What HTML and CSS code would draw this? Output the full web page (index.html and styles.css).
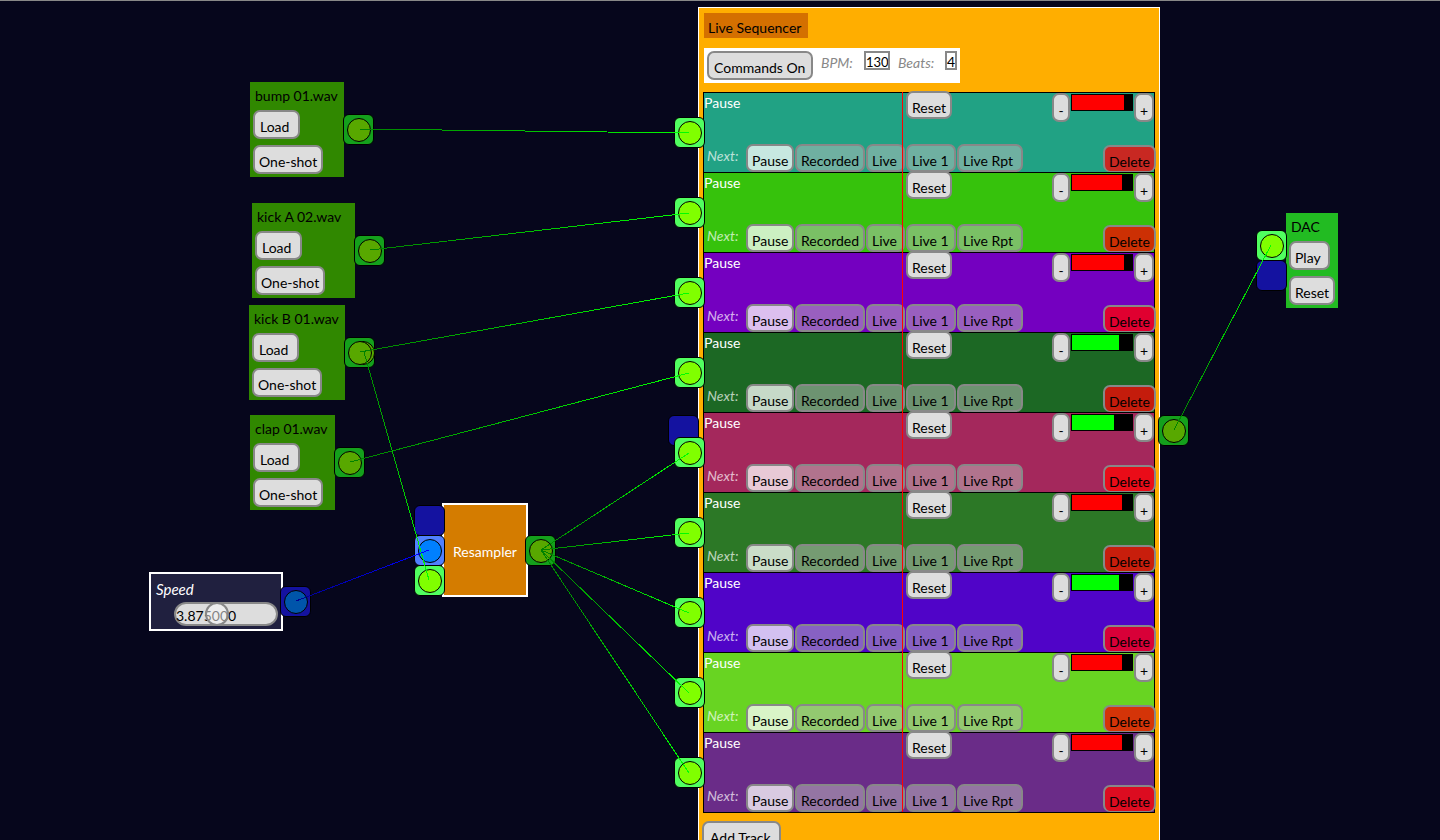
FILE: index.html
```html
<!DOCTYPE html>
<html lang="en">
<head>
<meta charset="utf-8">
<title>Live Sequencer</title>
<link rel="stylesheet" href="styles.css">
</head>
<body>
<main class="canvas">
  <section class="node sample bump">
    <h2 class="name">bump 01.wav</h2>
    <button class="btn load">Load</button>
    <button class="btn shot">One-shot</button>
    <span class="port out sound"></span>
  </section>
  <section class="node sample kick-a">
    <h2 class="name">kick A 02.wav</h2>
    <button class="btn load">Load</button>
    <button class="btn shot">One-shot</button>
    <span class="port out sound"></span>
  </section>
  <section class="node sample kick-b">
    <h2 class="name">kick B 01.wav</h2>
    <button class="btn load">Load</button>
    <button class="btn shot">One-shot</button>
    <span class="port out sound double"></span>
  </section>
  <section class="node sample clap">
    <h2 class="name">clap 01.wav</h2>
    <button class="btn load">Load</button>
    <button class="btn shot">One-shot</button>
    <span class="port out sound"></span>
  </section>

  <section class="node speed">
    <label class="speed-label" for="speed">Speed</label>
    <div class="slider">
      <output class="speed-value" for="speed">3.875000</output>
      <input class="range" id="speed" type="range" min="0" max="10" step="0.125" value="3.875">
    </div>
    <span class="port out control"></span>
  </section>

  <section class="node resampler">
    <h2 class="resampler-name">Resampler</h2>
    <div class="inputs">
      <span class="port empty"></span>
      <span class="port control-in"></span>
      <span class="port sound-in"></span>
    </div>
    <span class="port out sound"></span>
  </section>

  <section class="node dac">
    <h2 class="name">DAC</h2>
    <button class="btn play">Play</button>
    <button class="btn">Reset</button>
    <div class="inputs">
      <span class="port sound-in"></span>
      <span class="port empty"></span>
    </div>
  </section>

  <section class="node sequencer">
    <h1 class="title">Live Sequencer</h1>
    <div class="toolbar">
      <button class="btn commands">Commands On</button>
      <label class="field-label" for="bpm">BPM:</label>
      <input class="field bpm" id="bpm" type="text" value="130">
      <label class="field-label beats-label" for="beats">Beats:</label>
      <input class="field beats" id="beats" type="text" value="4">
    </div>
    <div class="tracks" id="tracks"><div class="playhead"></div></div>
    <button class="btn add">Add Track</button>
    <span class="port empty side-in"></span>
    <span class="port out sound"></span>
  </section>

  <svg class="wires" aria-hidden="true">
    <defs>
      <linearGradient id="green"><stop offset="0" stop-color="#008000"/><stop offset="1" stop-color="#00ff00"/></linearGradient>
      <linearGradient id="blue"><stop offset="0" stop-color="#000090"/><stop offset="1" stop-color="#0000ff"/></linearGradient>
    </defs>
    <g stroke="url(#green)" shape-rendering="crispEdges">
      <path d="M359 129L689 133"/>
      <path d="M370 250L689 213"/>
      <path d="M360 352L689 293"/>
      <path d="M350 462L689 373"/>
      <path d="M364 352L429 580"/>
      <path d="M541 550L689 453"/>
      <path d="M541 550L689 533"/>
      <path d="M541 550L689 613"/>
      <path d="M541 550L689 693"/>
      <path d="M541 550L689 773"/>
      <path d="M1174 430L1271 245"/>
    </g>
    <path d="M296 601L429 550" stroke="url(#blue)" shape-rendering="crispEdges"/>
  </svg>
</main>
<script src="script.js"></script>
</body>
</html>
```
FILE: styles.css
```css
* { box-sizing: border-box; }

body {
  margin: 0;
  background: #06061c;
  color: #000;
  font: 14px/20px Lato, "Open Sans", sans-serif;
}

.canvas {
  position: relative;
  height: 100vh;
  overflow: hidden;
  border-top: 1px solid #888;
}

h1, h2 { margin: 0; font-size: 14px; font-weight: 400; }

.btn {
  height: 29px;
  padding: 5px 4px 0;
  border: 2px solid #888;
  border-radius: 7px;
  background: #ddd;
  color: #000;
  font: inherit;
  line-height: 20px;
  text-align: left;
  white-space: nowrap;
}

/* Nodes placed on the patch canvas */
.node { position: absolute; isolation: isolate; }

.sample, .dac {
  display: flex;
  flex-direction: column;
  align-items: flex-start;
  gap: 6px;
  padding: 6px 3px 3px;
}
.sample { background: #308800; }
.name { padding: 0 2px; line-height: 16px; white-space: nowrap; }
.load { width: 47px; padding-left: 5px; }
.shot { width: 70px; }
.play { width: 41px; }
.bump { left: 250px; top: 81px; width: 94px; }
.kick-a { left: 252px; top: 202px; width: 103px; }
.kick-b { left: 249px; top: 304px; width: 96px; }
.clap { left: 250px; top: 414px; width: 85px; }
.dac { left: 1286px; top: 212px; width: 52px; background: #22bb22; }

.speed {
  left: 149px;
  top: 571px;
  width: 134px;
  padding: 5px 3px 3px 5px;
  border: 2px solid #fff;
  background: #20203f;
}
.speed-label { display: block; margin-bottom: 3px; color: #fff; font-size: 15px; font-style: italic; }
.slider { display: grid; width: 104px; margin-left: auto; }
.speed-value, .range { grid-area: 1 / 1; height: 24px; }
.speed-value {
  padding-top: 2px;
  border: 2px solid #888;
  border-radius: 12px;
  background: #ddd;
}
.range { appearance: none; width: 100%; margin: 0; padding: 0 2px; background: transparent; z-index: 1; }
.range::-webkit-slider-thumb {
  appearance: none;
  box-sizing: border-box;
  width: 24px;
  height: 24px;
  border: 2px solid #888;
  border-radius: 50%;
  background: rgba(255, 255, 255, 0.5);
}

.resampler {
  left: 442px;
  top: 502px;
  width: 86px;
  padding: 37px 0 33px;
  border: 2px solid #fff;
  background: #d47c00;
  color: #fff;
  text-align: center;
}
.resampler-name { line-height: 20px; }

/* Ports hang on the edges of their nodes */
.port {
  display: grid;
  place-items: center;
  width: 31px;
  height: 31px;
  border: 1px solid #000;
  border-radius: 6px;
}
.port::after {
  content: "";
  grid-area: 1 / 1;
  width: 22px;
  height: 22px;
  border: 1px solid #000;
  border-radius: 50%;
}
.out { position: absolute; left: 100%; top: 32px; margin-left: -1px; z-index: -1; }
.sound { background: #14a01c; }
.sound::after { background: #58a800; }
.double::before {
  content: "";
  grid-area: 1 / 1;
  width: 22px;
  height: 22px;
  margin-left: 6px;
  border: 1px solid #000;
  border-radius: 50%;
  background: #58a800;
}
.control { background: #1412a0; top: 12px; }
.control::after { background: #0055aa; }
.empty { background: #1412a0; }
.empty::after { display: none; }
.control-in { background: #5080ff; }
.control-in::after { background: #0080ff; }
.sound-in { background: #50ff60; }
.sound-in::after { background: #80ff00; }
.inputs { position: absolute; right: 100%; top: 0; margin-right: -1px; z-index: -1; }
.inputs .port + .port { margin-top: -1px; }
.dac .inputs { top: 17px; }
.resampler .out { top: 30px; }

/* Sequencer */
.sequencer {
  left: 698px;
  top: 6px;
  width: 462px;
  padding: 5px 4px 12px;
  border: 1px solid #fff;
  background: #ffae00;
}
.title {
  width: fit-content;
  min-width: 104px;
  height: 25px;
  margin: 0 1px 10px;
  padding: 5px 4px 0;
  background: #d47000;
  line-height: 20px;
}
.toolbar {
  display: flex;
  align-items: flex-start;
  width: 256px;
  height: 35px;
  margin: 0 1px 9px;
  padding: 3px;
  background: #fff;
}
.commands { width: 106px; margin-right: 8px; padding-left: 5px; }
.field-label { width: 43px; color: #888; font-style: italic; line-height: 24px; }
.beats-label { width: 47px; }
.field {
  height: 19px;
  margin: 0;
  padding: 2px 0 0;
  border: 2px solid #888;
  background: #fff;
  color: #000;
  font: inherit;
  text-align: center;
}
.bpm { width: 26px; margin-right: 8px; font-size: 13px; }
.beats { width: 12px; }

.tracks { position: relative; border: solid #000; border-width: 0 1px 1px; }
.track {
  display: flex;
  flex-direction: column;
  justify-content: space-between;
  position: relative;
  height: 80px;
  border-top: 1px solid #000;
}
.track-top { display: flex; align-items: flex-start; margin-top: -2px; }
.track-top .btn { height: 28px; }
.state { width: 202px; padding-top: 2px; color: #fff; }
.volume { display: flex; align-items: flex-start; margin: 2px 0 0 auto; gap: 1px; }
.track-top .step { width: 18px; height: 29px; padding: 6px 0 0; text-align: center; }
.track-top .plus { width: 20px; }
.level { width: 62px; height: 17px; margin-top: 1px; border: 1px solid #000; background: #000; }
.fill { height: 100%; background: #f00; }
.fill.low { background: #0f0; }

.track-bottom {
  display: grid;
  grid-template-columns: 38px 48px 70px 39px 50px 66px 1fr 53px;
  column-gap: 1px;
  align-items: end;
  margin-right: -2px;
  padding-left: 3px;
}
.next { align-self: center; padding-bottom: 4px; color: rgba(255, 255, 255, 0.7); font-style: italic; }
.mode { height: 28px; background: rgba(190, 190, 190, 0.5); }
.mode.active { background: rgba(255, 255, 255, 0.75); }
.delete { grid-column: 8; height: 27px; border-bottom-width: 1px; }

.playhead { position: absolute; left: 198px; top: 0; bottom: 0; width: 1px; background: #f00; z-index: 1; }
.track-port { position: absolute; right: 100%; top: 24px; margin-right: -1px; }
.add { display: block; width: 79px; margin: 8px 0 0 -1px; padding-left: 6px; }
.side-in { position: absolute; right: 100%; top: 407px; z-index: -1; }
.sequencer > .out { top: 407px; }

.wires { position: absolute; left: 0; top: -1px; width: 100%; height: 100%; pointer-events: none; fill: none; }
```
FILE: script.js
```js
const tracks = [
  { color: "#21a284", remove: "#c82822", level: 86 },
  { color: "#36c20c", remove: "#cc3004", level: 83 },
  { color: "#7400c0", remove: "#e00030", level: 86 },
  { color: "#1c6824", remove: "#c41c0c", level: 78 },
  { color: "#a4285c", remove: "#ea0c18", level: 70 },
  { color: "#2c7826", remove: "#c81e0c", level: 83 },
  { color: "#5004c8", remove: "#d80038", level: 78 },
  { color: "#68d422", remove: "#d43408", level: 83 },
  { color: "#6a2c88", remove: "#dc0c20", level: 83 }
];

const modes = ["Pause", "Recorded", "Live", "Live 1", "Live Rpt"];

const trackHtml = t => `
  <div class="track" style="background-color:${t.color}">
    <span class="port sound-in track-port"></span>
    <div class="track-top">
      <span class="state">Pause</span>
      <button class="btn">Reset</button>
      <div class="volume">
        <button class="btn step">-</button>
        <div class="level"><div class="fill${t.level < 80 ? " low" : ""}" style="width:${t.level}%"></div></div>
        <button class="btn step plus">+</button>
      </div>
    </div>
    <div class="track-bottom">
      <span class="next">Next:</span>
      ${modes.map((m, i) => `<button class="btn mode${i === 0 ? " active" : ""}">${m}</button>`).join("")}
      <button class="btn delete" style="background-color:${t.remove}">Delete</button>
    </div>
  </div>`;

document.getElementById("tracks").insertAdjacentHTML("beforeend", tracks.map(trackHtml).join(""));
```
